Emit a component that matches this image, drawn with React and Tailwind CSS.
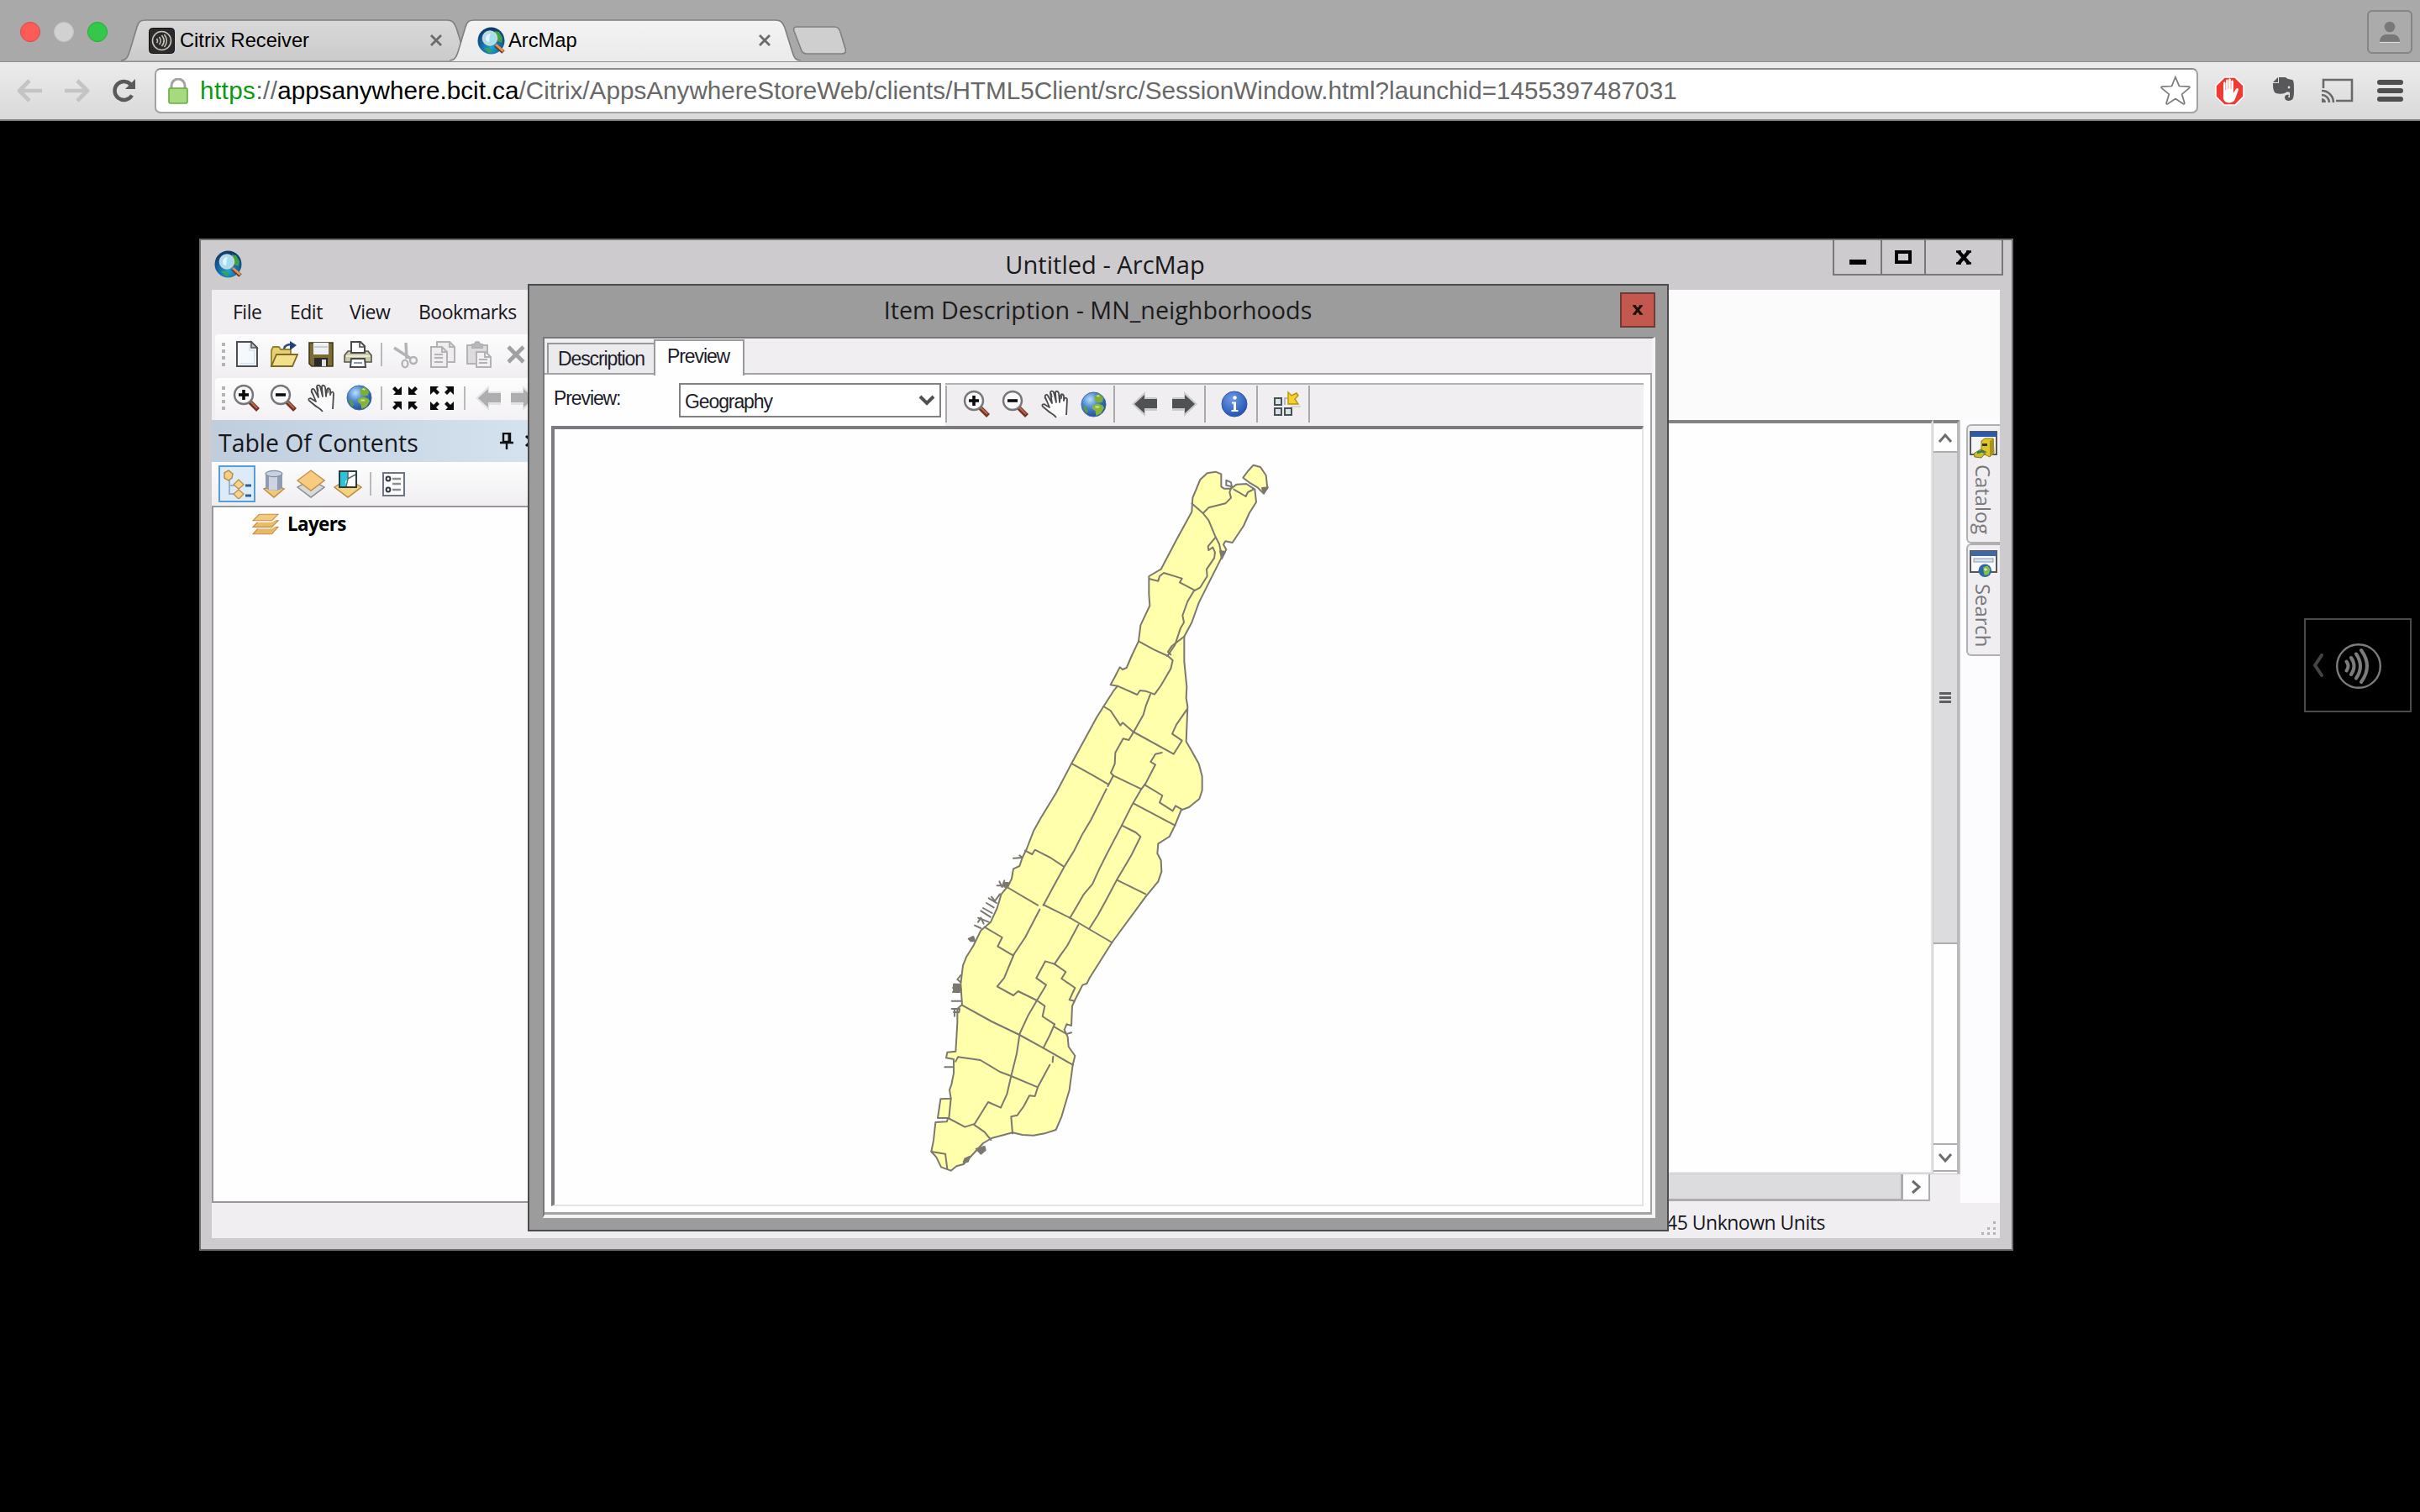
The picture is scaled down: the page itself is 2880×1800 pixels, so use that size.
import React from "react";

/* ---------- shared icons ---------- */

function Globe({ s = 31 }) {
  return (
    <svg width={s} height={s} viewBox="0 0 32 32">
      <defs>
        <radialGradient id="globe" cx="35%" cy="30%" r="75%">
          <stop offset="0" stopColor="#b9defb" />
          <stop offset="0.45" stopColor="#4b86cf" />
          <stop offset="1" stopColor="#1d4b95" />
        </radialGradient>
      </defs>
      <circle cx="16" cy="16" r="15" fill="url(#globe)" stroke="#3a6aa5" strokeWidth="1" />
      <path d="M17 6l6-3 5 5-1 5-5 1-4-2z" fill="#7fae35" />
      <path d="M15 17l6-2 6 2 2 3-4 7-6 3-1-6-4-3z" fill="#86b53a" />
      <path d="M3 17l4 2 2 5-1 3c-3-2-5-6-5-10z" fill="#5d9a4e" />
      <path d="M20 5l3 1M18 19l5 0" stroke="#d7e58a" strokeWidth="2" />
    </svg>
  );
}

function ArcMapLogo() {
  return (
    <svg width="33" height="33" viewBox="0 0 33 33">
      <defs>
        <radialGradient id="arc" cx="50%" cy="75%" r="75%">
          <stop offset="0" stopColor="#1aa6d8" />
          <stop offset="0.55" stopColor="#14639f" />
          <stop offset="1" stopColor="#0d3467" />
        </radialGradient>
      </defs>
      <circle cx="16.5" cy="16.5" r="16" fill="url(#arc)" />
      <path d="M21 5l5 1 4 7-1 6-5-2-3-6z" fill="#3fa244" />
      <path d="M8 25l7 0 3 5-4 1z" fill="#38a357" />
      <path d="M22 22l9 8" stroke="#6e3a1c" strokeWidth="5" />
      <path d="M22 21l9 8" stroke="#e0935a" strokeWidth="3" />
      <circle cx="15" cy="13.5" r="8.2" fill="#a4def2" stroke="#c9d6da" strokeWidth="2.2" />
      <path d="M10 14c0-4 3-6 6-6-2 3-1 6-2 10-2 0-4-1-4-4z" fill="#e0f6fc" />
    </svg>
  );
}

function Zoom({ plus }) {
  return (
    <svg width="34" height="34" viewBox="0 0 34 34">
      <path d="M20 21l10 10" stroke="#75331f" strokeWidth="5.5" />
      <path d="M20 20l9 9" stroke="#b07058" strokeWidth="2" />
      <circle cx="13" cy="13" r="11" fill="#f8f8fa" stroke="#77777a" strokeWidth="2.4" />
      <path d="M7 13h12" stroke="#0c0c0c" strokeWidth="3.6" />
      {plus && <path d="M13 7v12" stroke="#0c0c0c" strokeWidth="3.6" />}
    </svg>
  );
}

function Hand() {
  return (
    <svg width="34" height="34" viewBox="0 0 34 34">
      <path
        d="M19 33C16 29 12 28 9 25L3 20c-2-2 1-4 3-2l5 3-5-12c-1-3 2-4 3-2l5 9L12 4c0-3 3-3 4-1l3 12L18 4c0-3 3-3 4 0l1 11 1-8c1-3 3-2 4 0l0 6 1-3c2-1 3 0 3 2l-1 18"
        fill="#fbfbfc"
        stroke="#4b4b4e"
        strokeWidth="1.8"
        strokeLinejoin="round"
      />
      <path d="M5 9l3 5M13 4l1 5M18 4l0 5M26 6l-1 5" stroke="#4b4b4e" strokeWidth="1.2" />
    </svg>
  );
}

function FatArrow({ flip, faded }) {
  return (
    <svg width="34" height="34" viewBox="0 0 34 34" className={flip ? "-scale-x-100" : ""}>
      <path d="M1 17L17 2v7h14v16H17v7z" fill={faded ? "#e3e2e4" : "#cbcbcd"} />
      <path d="M4 17l12-11v5h15v11H16v6z" fill={faded ? "#aeadaf" : "#4f5154"} />
    </svg>
  );
}

function NewDoc() {
  return (
    <svg width="34" height="34" viewBox="0 0 34 34">
      <path d="M5 2h17l7 7v22H5z" fill="#f6f9fc" stroke="#4d4f54" strokeWidth="2" />
      <path d="M22 2v7h7z" fill="#c3c5c9" stroke="#4d4f54" strokeWidth="1.5" />
      <path d="M8 28h18V12h-6V5" fill="none" stroke="#dbe6ee" strokeWidth="2" />
    </svg>
  );
}

function OpenFolder() {
  return (
    <svg width="34" height="34" viewBox="0 0 34 34">
      <path d="M2 31V12l2-4h7l2 3h12v5" fill="#e9cf74" stroke="#96822f" strokeWidth="1.8" />
      <path d="M2 31l6-14h25l-6 14z" fill="#f3df8c" stroke="#7d6b22" strokeWidth="1.8" />
      <path d="M17 10c1-4 4-5 9-5" fill="none" stroke="#274b80" strokeWidth="2.6" />
      <path d="M24 1l8 5-8 6z" fill="#1f437a" />
    </svg>
  );
}

function Save() {
  return (
    <svg width="34" height="34" viewBox="0 0 34 34">
      <path d="M3 3h28v28H6l-3-3z" fill="#7c6c34" stroke="#3c3618" strokeWidth="1.6" />
      <rect x="8" y="3" width="18" height="14" fill="#eef1f3" />
      <path d="M9 8h16" stroke="#c9cdd1" strokeWidth="2" />
      <rect x="9" y="21" width="16" height="10" fill="#2a2a2a" />
      <rect x="18" y="23" width="5" height="8" fill="#e0e0e0" />
    </svg>
  );
}

function Print() {
  return (
    <svg width="34" height="34" viewBox="0 0 34 34">
      <path d="M5 13h24l4 5v8H1v-8z" fill="#c9c9ae" stroke="#55554a" strokeWidth="1.6" />
      <path d="M9 15V2h11l5 5v8z" fill="#fff" stroke="#4a4a4d" strokeWidth="2" />
      <path d="M19 2v6h6" fill="none" stroke="#4a4a4d" strokeWidth="1.6" />
      <path d="M3 19h28" stroke="#ecebd2" strokeWidth="2" />
      <path d="M9 22h16l1 10H8z" fill="#fff" stroke="#4a4a4d" strokeWidth="2" />
      <path d="M12 27h10" stroke="#8097b5" strokeWidth="2" />
    </svg>
  );
}

function Cut() {
  return (
    <svg width="34" height="34" viewBox="0 0 34 34" fill="none" stroke="#b3b2b4">
      <path d="M18 3l1 19M4 9l20 13" strokeWidth="3.4" />
      <circle cx="27" cy="24" r="4" strokeWidth="2.4" />
      <ellipse cx="17" cy="28" rx="3.4" ry="4.4" strokeWidth="2.4" />
    </svg>
  );
}

function Copy() {
  return (
    <svg width="34" height="34" viewBox="0 0 34 34" fill="#efedf0" stroke="#b3b2b4" strokeWidth="2">
      <path d="M10 2h15l6 6v18H10z" />
      <path d="M3 8h13l6 6v18H3z" />
      <path d="M16 8v6h6M7 17h10M7 21h10M7 26h10M25 2v6h6" fill="none" />
    </svg>
  );
}

function Paste() {
  return (
    <svg width="34" height="34" viewBox="0 0 34 34" fill="#dddbde" stroke="#b3b2b4" strokeWidth="2">
      <path d="M3 6h24v22H3z" />
      <path d="M9 9V5h3c0-4 6-4 6 0h3v4z" fill="#b9b8ba" />
      <path d="M14 14h11l6 6v12H14z" fill="#f2f0f3" />
      <path d="M24 14v6h6M17 23h10M17 27h10" fill="none" />
    </svg>
  );
}

function GrayX() {
  return (
    <svg width="34" height="34" viewBox="0 0 34 34">
      <path d="M8 8l18 18M26 8L8 26" stroke="#a09fa1" strokeWidth="4.6" />
    </svg>
  );
}

function FourArrows({ out }) {
  const one = out ? "M2 2h10l-3 3 4 4-3 3-4-4-4 4z" : "M12 12H2l3-3-4-4 3-3 4 4 4-4z";
  return (
    <svg width="32" height="32" viewBox="0 0 32 32" fill="#0b0b0b">
      <path d={one} />
      <path d={one} transform="translate(32 0) scale(-1 1)" />
      <path d={one} transform="translate(0 32) scale(1 -1)" />
      <path d={one} transform="translate(32 32) scale(-1 -1)" />
    </svg>
  );
}

function ListByOrder() {
  return (
    <svg width="36" height="36" viewBox="0 0 36 36">
      <path d="M9 13v17h6M9 20h6" fill="none" stroke="#9db2cf" strokeWidth="2" />
      <path d="M8 2l5 4-1 5-4 3-5-3V5z" fill="#f4cf85" stroke="#b88a3d" strokeWidth="1.4" />
      <path d="M20 13l6 6-6 5-6-5zM20 25l6 5-6 6-6-6z" fill="#f7d38c" stroke="#c3924a" strokeWidth="1.4" />
      <path d="M28 20h7M28 32h7" stroke="#2b6192" strokeWidth="3" />
    </svg>
  );
}

function ListBySource() {
  return (
    <svg width="34" height="34" viewBox="0 0 34 34">
      <path d="M5 23l12-5 12 5-12 10z" fill="#f2c878" stroke="#b98c3e" strokeWidth="1.4" />
      <path d="M7 5v17c4 4 16 4 20 0V5z" fill="#8f9cb4" />
      <path d="M11 7v17c3 1 7 1 10 0V7z" fill="#cdd4e0" />
      <ellipse cx="17" cy="5" rx="10" ry="3.6" fill="#c9d1de" stroke="#7d89a0" strokeWidth="1.2" />
    </svg>
  );
}

function ListByVisibility() {
  return (
    <svg width="34" height="34" viewBox="0 0 34 34">
      <path d="M1 21l16 12 16-12-16-9z" fill="#d9d9db" stroke="#88888b" strokeWidth="1.4" />
      <path d="M1 13L17 1l16 12-16 12z" fill="#f6cd7f" stroke="#c0924a" strokeWidth="1.4" />
    </svg>
  );
}

function ListBySelection() {
  return (
    <svg width="34" height="34" viewBox="0 0 34 34">
      <path d="M1 21l8-5 16 0 8 5-16 12z" fill="#f6d37f" stroke="#b5893d" strokeWidth="1.4" />
      <rect x="7" y="2" width="20" height="19" fill="#fff" stroke="#2d3a40" strokeWidth="2" />
      <path d="M8 3h9l0 8-3 3 1 6H8z" fill="#2cc3dc" />
      <path d="M17 3v8l9-5M17 11l-2 9" fill="none" stroke="#59676d" strokeWidth="1.5" />
    </svg>
  );
}

function Options() {
  return (
    <svg width="32" height="32" viewBox="0 0 32 32">
      <rect x="4" y="3" width="25" height="27" fill="#fdfdfe" stroke="#6d7483" strokeWidth="2" />
      <g fill="none" stroke="#33363d" strokeWidth="2">
        <circle cx="10" cy="10" r="2.4" />
        <circle cx="10" cy="23" r="2.4" />
      </g>
      <path d="M15 10h10M15 16h10M15 23h10" stroke="#8b8e96" strokeWidth="2.4" />
    </svg>
  );
}

function LayersIcon() {
  return (
    <svg width="32" height="27" viewBox="0 0 34 28" stroke="#c58f45" strokeWidth="1.2">
      <path d="M9 17h24l-8 9H1z" fill="#e8b868" />
      <path d="M9 15h24l-8 4H1z" fill="#fffdf8" stroke="none" />
      <path d="M9 9h24l-8 8H1z" fill="#eabb6c" />
      <path d="M9 7h24l-8 4H1z" fill="#fffdf8" stroke="none" />
      <path d="M9 1h24l-8 8H1z" fill="#f2c97f" />
    </svg>
  );
}

function Info() {
  return (
    <svg width="32" height="32" viewBox="0 0 32 32">
      <defs>
        <radialGradient id="info" cx="40%" cy="30%" r="75%">
          <stop offset="0" stopColor="#6c9ae6" />
          <stop offset="1" stopColor="#1f4fb0" />
        </radialGradient>
      </defs>
      <circle cx="16" cy="16" r="15" fill="url(#info)" stroke="#2b55a5" />
      <circle cx="16.5" cy="8.5" r="2.2" fill="#fff" />
      <path d="M13 13.500h5V23h2.500v2h-8v-2H15v-7.500h-2z" fill="#fff" />
    </svg>
  );
}

function GridStar() {
  return (
    <svg width="34" height="34" viewBox="0 0 34 34">
      <g fill="#d6e4ea" stroke="#4b5054" strokeWidth="2">
        <rect x="2" y="10" width="8" height="8" />
        <rect x="2" y="22" width="8" height="8" />
        <rect x="14" y="22" width="8" height="8" />
      </g>
      <path d="M14 18v-8h4" fill="none" stroke="#a9acae" strokeWidth="1.6" />
      <path d="M18 3l4 4 6-3 2 3-4 4 4 6H18z" fill="#f6d22c" stroke="#b8930e" strokeWidth="1.4" />
      <path d="M21 20h12" stroke="#c9c9cb" strokeWidth="1.4" />
    </svg>
  );
}

function CatalogIcon() {
  return (
    <svg width="33" height="33" viewBox="0 0 33 33">
      <rect x="1" y="1" width="31" height="27" fill="#f4f4f6" stroke="#55575c" strokeWidth="2" />
      <rect x="1" y="1" width="31" height="6" fill="#2f5aa5" />
      <path d="M14 12l4-3h10l1 17-5 5-10-5z" fill="#dcc52f" stroke="#8a7a12" strokeWidth="1" />
      <path d="M24 12l5-3v18l-5 4z" fill="#a8941a" />
      <rect x="15" y="15" width="6" height="3" fill="#3d3a14" />
      <path d="M5 27l8-5 7 3-6 7-8-1z" fill="#c9bd2c" stroke="#7b7418" />
      <path d="M9 26l6-2 3 2" fill="none" stroke="#2f7a52" strokeWidth="2.4" />
    </svg>
  );
}

function SearchIcon() {
  return (
    <svg width="33" height="33" viewBox="0 0 33 33">
      <rect x="1" y="1" width="31" height="25" fill="#fafafc" stroke="#55575c" strokeWidth="2" />
      <rect x="1" y="1" width="31" height="6" fill="#41699f" />
      <rect x="5" y="10" width="23" height="4" fill="#d8e3ee" stroke="#8e9aa8" />
      <g transform="translate(10 16) scale(0.52)">
        <circle cx="16" cy="16" r="15" fill="#2f67ad" />
        <path d="M12 8l10-3 6 8-4 12-9 2-2-8z" fill="#7fbf4a" />
        <path d="M13 12l6-2 2 5-5 2z" fill="#d9efb0" />
      </g>
    </svg>
  );
}

function Chevron({ dir, className = "" }) {
  const d = { up: "M3 14l7-8 7 8", down: "M3 6l7 8 7-8", right: "M6 3l8 7-8 7" }[dir];
  return (
    <svg width="20" height="20" viewBox="0 0 20 20" className={className}>
      <path d={d} fill="none" stroke="#6c6c6e" strokeWidth="3" />
    </svg>
  );
}

/* ---------- browser chrome ---------- */

function BrowserTab({ active, icon, title }) {
  const d =
    "M0 49C6 49 8 45 10 39L19 9C21 2 24 1 30 1H388C394 1 396 3 399 10L408 39C410 46 412 49 418 49";
  return (
    <div className={`relative flex h-[50px] w-[418px] items-center pl-[33px] pr-[35px] ${active ? "z-10 -ml-[27px]" : ""}`}>
      <svg className="absolute inset-0 -z-10" width="418" height="50" viewBox="0 0 418 50">
        <defs>
          <linearGradient id="tabOn" x2="0" y2="1">
            <stop offset="0" stopColor="#f3f3f3" />
            <stop offset="1" stopColor="#ebebeb" />
          </linearGradient>
          <linearGradient id="tabOff" x2="0" y2="1">
            <stop offset="0" stopColor="#d9d9d9" />
            <stop offset="1" stopColor="#cbcbcc" />
          </linearGradient>
        </defs>
        <path d={active ? d + "V50H0z" : d} fill={active ? "url(#tabOn)" : "url(#tabOff)"} />
        <path d={d} fill="none" stroke="#7f7f7f" strokeWidth="1.6" />
      </svg>
      <div className="flex w-[36px] shrink-0">{icon}</div>
      <span className="whitespace-nowrap pl-px pt-[2px] text-[23.7px] leading-none text-black">{title}</span>
      <svg className="ml-auto" width="16" height="16" viewBox="0 0 16 16">
        <path d="M2 2l12 12M14 2L2 14" stroke="#6b6b6b" strokeWidth="2.8" />
      </svg>
    </div>
  );
}

function CitrixFavicon() {
  return (
    <svg width="31" height="31" viewBox="0 0 31 31">
      <rect x="0.500" y="0.500" width="30" height="30" rx="4" fill="#2b2b2b" stroke="#111" />
      <g fill="none" stroke="#c9c4ba" strokeWidth="1.6">
        <circle cx="15.500" cy="15.500" r="11" />
        <path d="M9.500 13q2 2.500 0 5M12.500 11q3.500 4.500 0 9M15.500 9q5.500 6.500 0 13M18.500 8q6 7.500 0 15" />
      </g>
    </svg>
  );
}

function TabStrip() {
  return (
    <div className="flex h-[73px] bg-[#a9a9a9]">
      <div className="flex w-[144px] shrink-0 gap-4 pl-6 pt-[26px]">
        <span className="h-6 w-6 rounded-full border border-[#e2463f] bg-[#fc5b57]" />
        <span className="h-6 w-6 rounded-full border border-[#c4c4c4] bg-[#d1d1d1]" />
        <span className="h-6 w-6 rounded-full border border-[#1fae36] bg-[#34c84a]" />
      </div>
      <div className="isolate flex pt-[23px]">
        <BrowserTab icon={<CitrixFavicon />} title="Citrix Receiver" />
        <BrowserTab active icon={<ArcMapLogo />} title="ArcMap" />
      </div>
      <svg className="-ml-[10px] mt-[31px]" width="66" height="35" viewBox="0 0 66 35">
        <path
          d="M5 1H50C54 1 56 3 57 7L63 27C64 31 63 33 59 33H17C13 33 11 31 10 27L2 6C1 3 2 1 5 1z"
          fill="#cfcfcf"
          stroke="#808080"
          strokeWidth="1.6"
        />
      </svg>
      <div className="ml-auto mr-[9px] mt-3 flex h-[52px] w-[54px] items-center justify-center rounded-[6px] border-2 border-[#858585] bg-[#ababab]">
        <svg width="26" height="26" viewBox="0 0 26 26" fill="#787878">
          <circle cx="13" cy="7" r="6.3" />
          <path d="M1 25c0-6 4-9 8-9h8c4 0 8 3 8 9z" />
          <path d="M1 25.500h24" stroke="#dcdcdc" strokeWidth="1.2" />
        </svg>
      </div>
    </div>
  );
}

function NavArrow({ flip }) {
  return (
    <svg width="32" height="28" viewBox="0 0 32 28" className={flip ? "-scale-x-100" : ""}>
      <path d="M15 2L3 14l12 12M4 14h26" fill="none" stroke="#c4c4c4" strokeWidth="4.6" strokeLinejoin="round" />
    </svg>
  );
}

function AddressRow() {
  return (
    <div className="flex h-[71px] items-center border-b-2 border-[#7d7d7d] border-t border-t-[#8f8f8f] bg-gradient-to-b from-[#ececec] to-[#d9d9d9] pl-5 pr-5">
      <NavArrow />
      <div className="ml-[23px] flex"><NavArrow flip /></div>
      <svg className="ml-[26px]" width="30" height="30" viewBox="0 0 30 30">
        <path d="M24 20.500A11 11 0 1 1 23 8" fill="none" stroke="#5a5a5a" strokeWidth="4.400" />
        <path d="M28 1v12H16z" fill="#5a5a5a" />
      </svg>
      <div className="ml-[21px] flex h-[54px] w-[2432px] items-center rounded-[7px] border-2 border-[#a3a3a3] border-t-[#8e8e8e] bg-white pl-[14px] pr-[7px]">
        <svg width="24" height="31" viewBox="0 0 24 31">
          <path d="M4 15V9a8 8 0 0 1 16 0v6" fill="none" stroke="#a3a3a3" strokeWidth="3" />
          <rect x="1" y="12" width="22" height="18" rx="2" fill="#a5db7e" stroke="#69a846" strokeWidth="1.6" />
        </svg>
        <span className="ml-[14px] whitespace-nowrap text-[29.7px] leading-none text-[#686868]">
          <span className="tracking-[0.4px]"><span className="text-[#0a9a12]">https</span>://</span><span className="text-black">appsanywhere.bcit.ca</span>
          /Citrix/AppsAnywhereStoreWeb/clients/HTML5Client/src/SessionWindow.html?launchid=1455397487031
        </span>
        <svg className="ml-auto" width="36" height="36" viewBox="0 0 36 36">
          <path
            d="M18 1.500l4.600 11.500 12 .6c1 .2 1 1.400.3 2l-9 7.700 3.200 11c.2 1.200-.8 1.700-1.700 1.100L18 29l-9.400 6.400c-1 .6-1.900.1-1.700-1.100l3.200-11-9-7.700c-.7-.6-.7-1.800.3-2l12-.6z"
            fill="#fff"
            stroke="#7b7b7b"
            strokeWidth="1.800"
            transform="translate(0.500 0.300) scale(0.970 0.940)"
          />
        </svg>
      </div>
      <svg className="ml-5" width="35" height="35" viewBox="0 0 35 35">
        <path d="M11 1h13l10 10v13L24 34H11L1 24V11z" fill="#ee3b33" stroke="#fff" strokeWidth="1.600" />
        <path
          d="M10 19V8c0-2 2.600-2 2.600 0v8h.5V5c0-2 2.600-2 2.600 0v10h.5V4c0-2 2.600-2 2.600 0v11h.5V6c0-2 2.600-2 2.600 0v14l3-5c1-2 3.600-1 3 1l-4 11c-2 6-13 6-14-1z"
          fill="#fff"
        />
      </svg>
      <svg className="ml-[33px] -mt-1" width="27" height="30" viewBox="0 0 27 30">
        <path
          d="M8 1h7c2 0 3 2 4 2l5 1c2 1 2 6 2 11 0 6 0 12-3 13-3 2-8 1-8-3 0-3 3-4 5-3l-1 3h2v-6c-3-1-5 0-6 1-4 1-10 1-12-1C1 16 1 12 1 8h7z"
          fill="#58585a"
        />
        <path d="M1 7l6-6v6z" fill="#58585a" />
        <circle cx="20" cy="13" r="1.400" fill="#ddd" />
      </svg>
      <svg className="ml-[31px]" width="39" height="30" viewBox="0 0 39 30">
        <path d="M3 12V2h34v25H18" fill="none" stroke="#6a6a6a" strokeWidth="2.600" />
        <path d="M1 15a14 14 0 0 1 14 14M1 20a9 9 0 0 1 9 9" fill="none" stroke="#6a6a6a" strokeWidth="2.600" />
        <path d="M1 24a5 5 0 0 1 5 5H1z" fill="#6a6a6a" />
      </svg>
      <div className="-mt-px ml-auto flex w-[31px] flex-col gap-1">
        <span className="h-[6px] rounded-[3px] bg-[#4f4f4f]" />
        <span className="h-[6px] rounded-[3px] bg-[#4f4f4f]" />
        <span className="h-[6px] rounded-[3px] bg-[#4f4f4f]" />
      </div>
    </div>
  );
}

/* ---------- ArcMap main window ---------- */

const Cell = ({ children, className = "" }) => (
  <div className={`flex h-[44px] w-[44px] shrink-0 items-center justify-center ${className}`}>{children}</div>
);
const Sep = ({ className = "" }) => <div className={`h-[28px] w-[2px] shrink-0 bg-[#b9b8ba] ${className}`} />;
const Grip = () => (
  <div className="mr-[4px] flex w-[4px] shrink-0 flex-col gap-1">
    {[0, 1, 2, 3].map((i) => (
      <span key={i} className="h-1 w-1 bg-[#b4b3b6]" />
    ))}
  </div>
);

function LeftPane() {
  return (
    <div className="flex w-[400px] shrink-0 flex-col overflow-hidden bg-[#f0eef1] font-['Open_Sans',sans-serif] text-[#17171c]">
      <div className="flex h-[53px] items-center pb-px pl-[25px] text-[23px] tracking-[-0.5px]">
        <span className="w-[68px]">File</span>
        <span className="w-[71px]">Edit</span>
        <span className="w-[82px]">View</span>
        <span>Bookmarks</span>
      </div>
      <div className="ml-1 flex h-[52px] items-center rounded-l-[4px] bg-gradient-to-b from-[#fdfdfd] to-[#f0eef1] pb-[5px] pl-[8px]">
        <Grip />
        <Cell><NewDoc /></Cell>
        <Cell><OpenFolder /></Cell>
        <Cell><Save /></Cell>
        <Cell><Print /></Cell>
        <Sep className="mx-[5px]" />
        <Cell><Cut /></Cell>
        <Cell className="pl-[2px]"><Copy /></Cell>
        <Cell><Paste /></Cell>
        <Cell><GrayX /></Cell>
      </div>
      <div className="ml-1 flex h-[50px] items-center rounded-l-[4px] bg-gradient-to-b from-[#fdfdfd] to-[#f3f1f4] pb-[3px] pl-[8px]">
        <Grip />
        <Cell><Zoom plus /></Cell>
        <Cell><Zoom /></Cell>
        <Cell><Hand /></Cell>
        <Cell className="pl-[3px]"><Globe /></Cell>
        <Sep className="mx-[5px]" />
        <Cell><FourArrows /></Cell>
        <Cell><FourArrows out /></Cell>
        <Sep className="mx-[4px]" />
        <Cell className="pl-[3px]"><FatArrow faded /></Cell>
        <Cell className="-ml-1 pl-[3px]"><FatArrow faded flip /></Cell>
      </div>
      <div className="flex h-[50px] shrink-0 items-center bg-gradient-to-r from-[#bfcddd] to-[#d6e3f0] pl-[8px] pt-[4px]">
        <span className="w-[335px] text-[28.4px] leading-none">Table Of Contents</span>
        <svg width="16" height="20" viewBox="0 0 16 20" className="-mt-[5px]">
          <path d="M4 1h8v10H4zM0 12h16M8 12v8" fill="none" stroke="#111" strokeWidth="2.400" />
          <path d="M11 1v10" stroke="#111" strokeWidth="3" />
        </svg>
        <svg width="14" height="14" viewBox="0 0 14 14" className="-mt-[5px] ml-[14px]">
          <path d="M1 1l12 12M13 1L1 13" stroke="#111" strokeWidth="3" />
        </svg>
      </div>
      <div className="flex h-[52px] shrink-0 items-center bg-gradient-to-b from-[#fdfdfd] to-[#f0eef1] pl-[8px]">
        <Cell className="border-2 border-[#5b9bd8] bg-[#dcebf8]"><ListByOrder /></Cell>
        <Cell><ListBySource /></Cell>
        <Cell><ListByVisibility /></Cell>
        <Cell><ListBySelection /></Cell>
        <Sep className="mx-[4px]" />
        <Cell><Options /></Cell>
      </div>
      <div className="flex-1 border-2 border-[#98979a] bg-[#fefefe] pl-[46px] pt-[5px]">
        <div className="flex h-[30px] items-center">
          <LayersIcon />
          <span className="ml-[10px] pt-px text-[22.400px] font-bold leading-none tracking-[-0.600px] text-black">Layers</span>
        </div>
      </div>
    </div>
  );
}

function SideTab({ icon, label, className }) {
  return (
    <div className={`flex w-[40px] flex-col items-center rounded-l-[6px] border-2 border-r-0 border-[#b0afb2] bg-[#f0eef1] pr-[2px] pt-[6px] ${className}`}>
      {icon}
      <span className="mt-[7px] font-['Open_Sans',sans-serif] text-[23.800px] leading-[30px] text-[#77777c] [writing-mode:vertical-rl]">
        {label}
      </span>
    </div>
  );
}

function DataView() {
  return (
    <div className="flex min-h-0 flex-1">
      <div className="flex flex-1 flex-col">
        <div className="flex flex-1">
          <div className="flex-1 border-b-2 border-r-2 border-t-4 border-b-[#e4e3e5] border-r-[#e4e3e5] border-t-[#828284] bg-[#fefefe]" />
          <div className="mr-px ml-px flex w-[31px] flex-col border-r-[3px] border-t-4 border-r-[#b9b8ba] border-t-[#828284] bg-[#fefefe]">
            <div className="flex h-[35px] items-center justify-center border-b-2 border-[#adacae]">
              <Chevron dir="up" className="mt-[3px]" />
            </div>
            <div className="flex h-[585px] flex-col items-center justify-center gap-[2px] border-b-2 border-[#adacae] bg-[#dcdbdd] pb-px">
              <span className="h-[3px] w-[14px] bg-[#5f5f61]" />
              <span className="h-[3px] w-[14px] bg-[#5f5f61]" />
              <span className="h-[3px] w-[14px] bg-[#5f5f61]" />
            </div>
            <div className="flex-1" />
            <div className="mb-[2px] flex h-[34px] items-center justify-center border-b-2 border-t-2 border-[#adacae]">
              <Chevron dir="down" />
            </div>
          </div>
        </div>
        <div className="mt-px flex h-[34px] bg-[#f0eef1]">
          <div className="mb-[2px] flex-1 border-b-[3px] border-r-[3px] border-[#adacae] bg-[#dcdbde]" />
          <div className="mb-[2px] flex w-[32px] items-center justify-center border-b-2 border-r-2 border-[#adacae] bg-[#fefefe]">
            <Chevron dir="right" />
          </div>
          <div className="w-[36px]" />
        </div>
      </div>
      <div className="flex w-[47px] flex-col items-end bg-[#fcfbfd] pt-[5px]">
        <SideTab className="h-[142px]" icon={<CatalogIcon />} label="Catalog" />
        <SideTab className="h-[134px]" icon={<SearchIcon />} label="Search" />
      </div>
    </div>
  );
}

function MainWindow() {
  const btn = "flex items-center justify-center border-b-2 border-r-2 border-[#77767a]";
  return (
    <div className="absolute left-[237px] top-[140px] flex h-[1205px] w-[2159px] flex-col border-2 border-[#6e6d70] bg-[#cecbce] pb-[13px] pl-[13px] pr-[14px]">
      <div className="relative flex h-[59px] shrink-0 items-start">
        <div className="mt-[12px] pl-[3px]"><ArcMapLogo /></div>
        <div className="absolute inset-x-0 top-0 flex h-[60px] items-center justify-center pr-[2px] font-['Open_Sans',sans-serif] text-[29.100px] text-[#19191c]">
          Untitled - ArcMap
        </div>
        <div className="relative -mr-[4px] ml-auto flex h-[42px] border-l-2 border-[#77767a]">
          <div className={`${btn} w-[57px] pt-[12px]`}><span className="h-[6px] w-[20px] bg-black" /></div>
          <div className={`${btn} w-[52px]`}><span className="h-[16px] w-[20px] border-4 border-black" /></div>
          <div className={`${btn} w-[92px]`}>
            <svg width="20" height="17" viewBox="0 0 20 17">
              <path d="M3.500 1l13 15M16.500 1l-13 15" stroke="#000" strokeWidth="4.200" />
              <path d="M1 1.500h6M13 1.500h6M1 15.500h6M13 15.500h6" stroke="#000" strokeWidth="2.400" />
            </svg>
          </div>
        </div>
      </div>
      <div className="flex min-h-0 flex-1 flex-col">
        <div className="flex min-h-0 flex-1">
          <LeftPane />
          <div className="flex flex-1 flex-col">
            <div className="h-[155px] shrink-0 bg-[#fbfbfc]" />
            <DataView />
          </div>
        </div>
        <div className="flex h-[42px] shrink-0 items-center bg-[#f0eef1] pl-[1731px] font-['Open_Sans',sans-serif] text-[23px] tracking-[-0.500px] text-[#17171c]">
          <span className="whitespace-nowrap pt-[5px]">45 Unknown Units</span>
          <svg className="ml-auto mr-[4px] mt-[20px]" width="18" height="18" viewBox="0 0 18 18" fill="#b3b2b5">
            <path d="M14 0h3v3h-3zM7 7h3v3H7zM14 7h3v3h-3zM0 13h3v3H0zM7 13h3v3H7zM14 13h3v3h-3z" />
          </svg>
        </div>
      </div>
    </div>
  );
}

/* ---------- map of Manhattan ---------- */

const shift = (s, dx, dy) =>
  s.trim().split(/\s+/).map((p) => {
    const [x, y] = p.split(",").map(Number);
    return `${x + dx},${y + dy}`;
  }).join(" ");

const NORTH = [660, -1410];
const MID = [360, -540];

const OUTLINE = [
  shift("40,930 75,875 90,857 65,853 80,825 98,790 108,798 122,792 140,750 165,697 172,640 205,570 202,530 202,465 245,440 300,335 355,235 358,185 385,120 410,97 440,92 460,100 460,145 470,152 495,152 515,137 550,135 580,155 585,200 560,240 540,285 520,315 500,345 475,340 468,352 478,370 463,395 410,500 380,560 355,630 328,680 328,770 337,860 335,900 340,930 335,1055", ...NORTH),
  shift("655,220 680,265 692,310 692,360 682,390 645,420 617,430 595,485 575,525 535,550 532,585 545,610 547,650 535,685 490,740 370,903", ...MID),
  "650,490 640,510 625,515 597,570 588,590 585,660 568,655 560,675 572,700 575,735 598,768 590,800 578,890 550,985 530,1032 490,1045 450,1052 410,1050 375,1042 300,1062 270,1080 200,1155 175,1162 155,1178 120,1165 103,1130 85,1110 93,1070 100,1005 140,1003 145,990 108,990 118,922 155,920 150,890 157,870 165,830 165,780 138,775 142,755 172,752 178,650 178,600 195,585 190,510 198,445 210,415 235,375 262,320 297,290 320,240 335,190 360,160",
  shift("0,700 12,675 18,640 40,630 50,600 65,570 90,505 115,460 170,370 225,265 315,100", ...MID),
].join(" ");

const NORTH_LINES = [
  "355,205 395,240 415,265 440,325 453,350 463,395",
  "395,240 415,220 475,205 495,185 490,165 495,150",
  "505,155 548,180 555,165 575,155",
  "438,328 413,358 415,372 430,362 438,380 435,400 408,440 410,465 385,505 362,518 340,555 322,605 327,630 315,650 295,710 268,750",
  "205,475 235,482 240,465 255,453 320,473 312,487 365,515",
  "165,697 220,727 270,750 287,765 280,795 245,855 222,887 190,875 170,873 160,888 90,857",
  "328,680 283,715 270,735 280,745",
  "207,887 192,925 182,960 148,1020",
  "40,930 65,945 100,998 108,988 145,1020 290,1100 320,1052 285,1028 300,995 338,940",
  "148,1020 130,1050 110,1045 82,1095 80,1135 66,1167 75,1178",
  "478,122 495,130 498,145 478,140 478,122",
];
const MID_LINES = [
  "375,307 355,345",
  "228,265 300,305 355,337",
  "350,355 295,465 265,515 235,575 200,632 160,705 125,770",
  "375,307 475,355",
  "548,225 525,230 508,258 525,268 490,335 475,355 440,415 405,485 350,590 325,640 300,695 270,730 235,790 220,815",
  "487,340 550,378 540,403 587,433 597,415 620,428",
  "448,407 595,485",
  "405,485 455,510 472,525 440,590 388,678 350,750 320,805 288,855",
  "388,680 490,730",
  "60,575 85,588 95,572 150,600 198,632",
  "0,708 105,770",
  "125,768 220,815 288,855 370,903",
  "112,785 60,885 20,945",
  "250,840 210,915 185,950 165,980",
  "18,602 50,600 40,592",
];
const SOUTH_LINES = [
  "380,405 345,490 320,520 378,552 395,537 462,570 490,590 482,627 525,655",
  "275,308 338,345 322,377 378,410",
  "525,440 492,430 460,490 495,515 462,570 430,625 400,690",
  "525,440 565,468 550,492 598,525 578,568 597,572",
  "195,587 300,645 400,693 485,740 590,800",
  "525,655 510,690 485,740",
  "525,665 568,690 585,685",
  "400,693 390,760 370,840 355,905 333,953 288,933 240,1010",
  "172,788 180,772 260,783 330,825 370,840 465,880",
  "520,770 518,790",
  "508,800 465,880 455,912 435,910 415,948 392,980 370,985 375,1045",
  "145,990 205,1022 235,1012 275,1040 298,1068",
  "155,920 148,990",
  "85,1110 135,1118 142,1172",
  "133,808 160,808",
  "158,572 192,572",
  "162,540 186,540 186,515 168,512",
  "162,525 192,530",
  "158,600 186,600 184,612 165,612",
  "168,600 168,626",
  "320,160 358,160",
  "328,145 338,165 346,142",
  "290,205 318,222",
  "282,222 308,238",
  "270,240 302,258",
  "262,250 296,272",
  "252,275 290,290",
  "240,302 262,312",
  "300,200 312,215 330,190",
  "252,290 262,275 272,296",
  "190,480 178,495 190,505",
];
const BLOBS = ["218,350 235,342 240,358 226,358", "245,1100 275,1092 278,1105 262,1118", "343,150 360,150 358,166 346,164", "205,1135 222,1128 216,1145 200,1148", "165,512 184,512 184,540 165,540"];

function ManhattanMap() {
  const draw = (list) => list.map((p) => <polyline key={p} points={p} />);
  return (
    <svg className="block" width="1294" height="924" viewBox="-1260 -1470 3882 2772">
      <g fill="#ffffac" stroke="#7b786f" strokeWidth="6" strokeLinejoin="round" strokeLinecap="round">
        <polygon points={OUTLINE} />
        <polygon points="575,68 600,75 620,105 625,150 610,168 590,148 560,130 538,113 555,90" transform="translate(660 -1410)" />
        <g fill="none" transform="translate(660 -1410)">{draw(NORTH_LINES)}</g>
        <g fill="none" transform="translate(360 -540)">{draw(MID_LINES)}</g>
        <g fill="none">{draw(SOUTH_LINES)}</g>
        <g fill="#7b786f">
          <polygon points="456,375 474,378 462,402" transform="translate(660 -1410)" />
          <polygon points="606,150 626,148 612,170" transform="translate(660 -1410)" />
          {BLOBS.map((p) => (
            <polygon key={p} points={p} />
          ))}
        </g>
      </g>
    </svg>
  );
}

/* ---------- Item Description dialog ---------- */

function ItemDialog() {
  const sep = "h-[44px] w-[2px] shrink-0 bg-[#a9a8ab]";
  const cell = "flex w-[46px] shrink-0 items-center justify-center";
  return (
    <div className="absolute left-[628px] top-[194px] flex h-[1128px] w-[1358px] flex-col border-2 border-[#4c4b4d] bg-[#9c9c9c] pb-[14px] pl-[16px] pr-[14px]">
      <div className="relative flex h-[61px] shrink-0 items-start">
        <div className="absolute inset-x-0 top-0 flex h-[58px] items-center justify-center pr-[3px] font-['Open_Sans',sans-serif] text-[28.700px] text-[#1b1b1d]">
          Item Description - MN_neighborhoods
        </div>
        <div className="relative ml-auto mt-[8px] flex h-[42px] w-[42px] items-center justify-center border-2 border-[#6e3b36] bg-[#c3584e]">
          <svg width="12" height="12" viewBox="0 0 12 12">
            <path d="M2 1l8 10M10 1L2 11" stroke="#1a0d0c" strokeWidth="3" />
            <path d="M0 1h4M8 1h4M0 11h4M8 11h4" stroke="#1a0d0c" strokeWidth="1.600" />
          </svg>
        </div>
      </div>
      <div className="flex min-h-0 flex-1 flex-col border-2 border-b-4 border-r-4 border-[#77767a] border-b-[#f4f3f5] border-r-[#f4f3f5] bg-[#f0eef1] font-['Liberation_Sans',Arial,sans-serif] text-[23px] tracking-[-1.100px] text-[#1d1d2b]">
        <div className="flex h-[41px] shrink-0 items-end pl-[3px]">
          <div className="flex h-[36px] w-[127px] items-center border-l-2 border-t-2 border-[#99989b] bg-[#ebeaec] pl-[11px]">Description</div>
          <div className="relative z-10 -mb-[3px] flex h-[43px] w-[108px] items-center border-x-2 border-t-2 border-[#99989b] bg-[#fefefe] pb-[4px] pl-[14px]">Preview</div>
        </div>
        <div className="flex min-h-0 flex-1 flex-col border-b-[3px] border-r-2 border-t-2 border-[#a3a2a5] bg-[#fefefe] pb-[7px] pl-[8px] pr-[8px] pt-[8px]">
          <div className="flex h-[53px] shrink-0 items-start">
            <span className="-mt-[2px] w-[152px] pl-[3px] leading-[44px]">Preview:</span>
            <div className="mt-[2px] flex h-[41px] w-[312px] items-center justify-between border-2 border-[#828185] bg-white pl-[5px] pr-[4px]">
              <span className="pt-[3px]">Geography</span>
              <svg width="22" height="18" viewBox="0 0 22 18">
                <path d="M3 4l8 8 8-8" fill="none" stroke="#505052" strokeWidth="4" />
              </svg>
            </div>
            <div className="ml-[5px] mt-[2px] flex h-[51px] flex-1 items-center border-t-2 border-[#b3b2b5] bg-[#f0eef1] pb-[3px]">
              <div className={sep} />
              <div className="flex w-[198px] pl-[13px]">
                <div className={cell}><Zoom plus /></div>
                <div className={cell}><Zoom /></div>
                <div className={cell}><Hand /></div>
                <div className={cell}><Globe /></div>
              </div>
              <div className={sep} />
              <div className="flex w-[106px] pl-[13px]">
                <div className={cell}><FatArrow /></div>
                <div className={cell}><FatArrow flip /></div>
              </div>
              <div className={sep} />
              <div className="flex w-[60px] justify-center pl-[8px]"><Info /></div>
              <div className={sep} />
              <div className="flex w-[60px] justify-center pl-[9px]"><GridStar /></div>
              <div className={sep} />
            </div>
          </div>
          <div className="min-h-0 flex-1 overflow-hidden border-b-2 border-l-4 border-r-2 border-t-4 border-[#7c7c80] border-b-[#e4e3e5] border-r-[#e4e3e5] bg-[#fefefe]">
            <ManhattanMap />
          </div>
        </div>
      </div>
    </div>
  );
}

function CitrixHandle() {
  return (
    <div className="absolute left-[2742px] top-[592px] flex h-[112px] w-[128px] items-center border-2 border-[#4b4b4b] pl-[8px]">
      <svg width="14" height="28" viewBox="0 0 14 28">
        <path d="M11 2L3 14l8 12" fill="none" stroke="#444" strokeWidth="4" strokeLinecap="round" />
      </svg>
      <svg className="ml-[14px] mt-[2px]" width="54" height="54" viewBox="0 0 54 54" fill="none" stroke="#7c7c7c">
        <circle cx="27" cy="27" r="25.800" strokeWidth="2.400" />
        <path d="M12.500 21.500q4 5.500 0 11M18 17q7 10 0 20M24 12.500q10 14.500 0 29M30 8q14 19 0 38" strokeWidth="4" strokeLinecap="round" />
      </svg>
    </div>
  );
}

export default function App() {
  return (
    <div className="flex h-[1800px] w-[2880px] flex-col overflow-hidden bg-black font-['Liberation_Sans',Arial,sans-serif]">
      <header className="h-[144px] shrink-0">
        <TabStrip />
        <AddressRow />
      </header>
      <main className="relative flex-1 bg-black">
        <MainWindow />
        <ItemDialog />
        <CitrixHandle />
      </main>
    </div>
  );
}
